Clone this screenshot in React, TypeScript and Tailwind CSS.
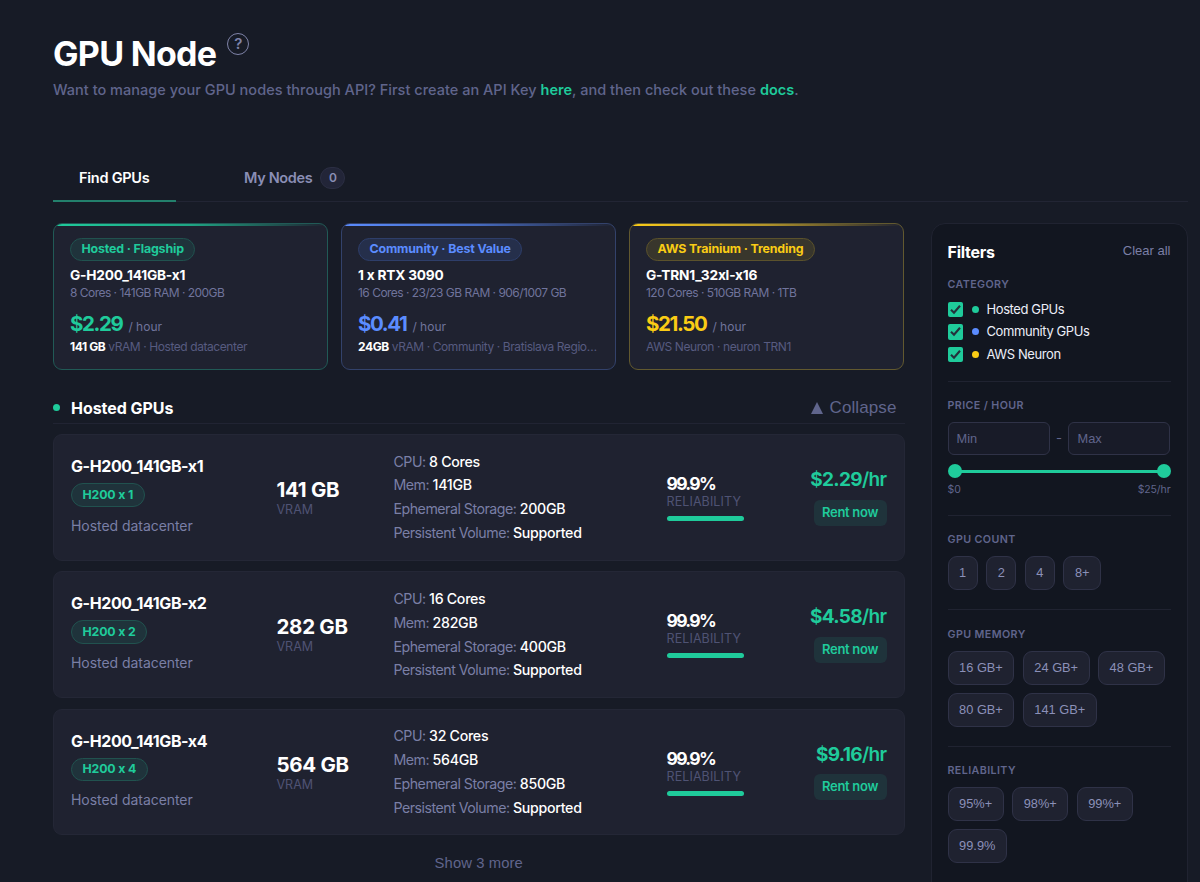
import React from 'react'

type Tone = 'green' | 'blue' | 'yellow'

const tones: Record<Tone, { card: string; bar: string; pill: string; text: string; dot: string }> = {
  green: {
    card: 'border-[#215a56]',
    bar: 'from-[#1fcb9b] via-[#1fa584] to-transparent',
    pill: 'border-[#21524f] bg-[#1f333b]',
    text: 'text-[#1fcb9b]',
    dot: 'bg-[#1fcb9b]',
  },
  blue: {
    card: 'border-[#33426b]',
    bar: 'from-[#5b8cff] via-[#466bc0] to-transparent',
    pill: 'border-[#2e3e6a] bg-[#252f4b]',
    text: 'text-[#5b8cff]',
    dot: 'bg-[#5b8cff]',
  },
  yellow: {
    card: 'border-[#62592f]',
    bar: 'from-[#facc15] via-[#b1932a] to-transparent',
    pill: 'border-[#5b522c] bg-[#38362c]',
    text: 'text-[#facc15]',
    dot: 'bg-[#facc15]',
  },
}

interface Featured {
  tone: Tone
  tag: string
  name: string
  specs: string
  price: string
  vram?: string
  note: string
}

const featured: Featured[] = [
  {
    tone: 'green',
    tag: 'Hosted · Flagship',
    name: 'G-H200_141GB-x1',
    specs: '8 Cores · 141GB RAM · 200GB',
    price: '$2.29',
    vram: '141 GB',
    note: 'vRAM · Hosted datacenter',
  },
  {
    tone: 'blue',
    tag: 'Community · Best Value',
    name: '1 x RTX 3090',
    specs: '16 Cores · 23/23 GB RAM · 906/1007 GB',
    price: '$0.41',
    vram: '24GB',
    note: 'vRAM · Community · Bratislava Regio…',
  },
  {
    tone: 'yellow',
    tag: 'AWS Trainium · Trending',
    name: 'G-TRN1_32xl-x16',
    specs: '120 Cores · 510GB RAM · 1TB',
    price: '$21.50',
    note: 'AWS Neuron · neuron TRN1',
  },
]

const nodes = [
  { name: 'G-H200_141GB-x1', gpu: 'H200 x 1', vram: '141 GB', cpu: '8 Cores', mem: '141GB', disk: '200GB', price: '$2.29' },
  { name: 'G-H200_141GB-x2', gpu: 'H200 x 2', vram: '282 GB', cpu: '16 Cores', mem: '282GB', disk: '400GB', price: '$4.58' },
  { name: 'G-H200_141GB-x4', gpu: 'H200 x 4', vram: '564 GB', cpu: '32 Cores', mem: '564GB', disk: '850GB', price: '$9.16' },
]

const categories: { label: string; tone: Tone }[] = [
  { label: 'Hosted GPUs', tone: 'green' },
  { label: 'Community GPUs', tone: 'blue' },
  { label: 'AWS Neuron', tone: 'yellow' },
]

function FeaturedCard({ item }: { item: Featured }) {
  const tone = tones[item.tone]
  return (
    <div className={`relative h-[147px] w-[275px] overflow-hidden rounded-[9px] border bg-[#1f2230] px-4 pt-[13.5px] ${tone.card}`}>
      <div className={`absolute inset-x-0 top-0 h-0.5 bg-gradient-to-r ${tone.bar}`} />
      <div className={`flex h-[23.5px] w-fit items-center rounded-full border px-[10.5px] text-[12.4px] font-bold tracking-[-0.15px] ${tone.pill} ${tone.text}`}>
        {item.tag}
      </div>
      <div className="mt-[5px] text-[13.7px] leading-[18px] font-bold tracking-[-0.2px] text-white">{item.name}</div>
      <div className="text-[12px] leading-[17px] tracking-[-0.52px] text-[#70749c]">{item.specs}</div>
      <div className="mt-[9px] flex h-[27px] items-baseline gap-[6px]">
        <span className={`text-[20.5px] leading-[27px] font-bold tracking-[-1.4px] ${tone.text}`}>{item.price}</span>
        <span className="text-[12px] text-[#70749c]">/ hour</span>
      </div>
      <div className="mt-px text-[12px] leading-[18px] tracking-[-0.42px] whitespace-nowrap text-[#575b80]">
        {item.vram && <b className="mr-[3px] font-bold text-white">{item.vram}</b>}
        {item.note}
      </div>
    </div>
  )
}

function Spec({ label, value }: { label: string; value: string }) {
  return (
    <div className="text-[14.2px] leading-[23.9px] tracking-[-0.5px] text-[#7a7fa6]">
      {label}: <span className="font-medium tracking-[-0.3px] text-white">{value}</span>
    </div>
  )
}

function NodeRow({ node }: { node: (typeof nodes)[number] }) {
  return (
    <div className="flex h-[126.5px] rounded-[9px] border border-[#242736] bg-[#1f2230] px-[17px]">
      <div className="w-[205.5px] pt-[21px]">
        <div className="text-[16px] leading-5 font-bold tracking-[-0.4px] text-white">{node.name}</div>
        <div className="mt-[7px] flex h-[23.5px] w-fit items-center rounded-full border border-[#21524f] bg-[#1f333b] px-[10.5px] text-[12.3px] font-bold tracking-[-0.15px] text-[#1fcb9b]">
          {node.gpu}
        </div>
        <div className="mt-[9px] text-[14px] leading-5 tracking-[-0.05px] text-[#7a7fa6]">Hosted datacenter</div>
      </div>
      <div className="w-[117px] pt-[42px]">
        <div className="text-[20.5px] leading-[26px] font-bold tracking-[-0.3px] text-white">{node.vram}</div>
        <div className="text-[12.5px] leading-[13px] text-[#4f5374]">VRAM</div>
      </div>
      <div className="w-[273px] pt-[14.5px]">
        <Spec label="CPU" value={node.cpu} />
        <Spec label="Mem" value={node.mem} />
        <Spec label="Ephemeral Storage" value={node.disk} />
        <Spec label="Persistent Volume" value="Supported" />
      </div>
      <div className="w-[77px] pt-[38px]">
        <div className="text-[17.5px] leading-[22px] font-bold tracking-[-1.7px] text-white">99.9%</div>
        <div className="text-[12.5px] leading-[14px] tracking-[0.1px] text-[#4f5374]">RELIABILITY</div>
        <div className="mt-[7px] h-[5px] rounded-full bg-[#1fcb9b]" />
      </div>
      <div className="flex flex-1 flex-col items-end pt-[33px]">
        <div className="text-[19px] leading-6 font-bold tracking-[-0.65px] text-[#1fcb9b]">
          {node.price}
          <span className="font-semibold">/hr</span>
        </div>
        <button className="mt-[7.5px] h-[26px] w-[73px] rounded-[6px] bg-[#1f333b] text-[13px] font-semibold tracking-[-0.3px] text-[#1fcb9b]">
          Rent now
        </button>
      </div>
    </div>
  )
}

function Heading({ children }: { children: React.ReactNode }) {
  return <div className="text-[10.7px] leading-4 font-semibold tracking-[0.4px] text-[#60658c]">{children}</div>
}

function Chips({ items }: { items: string[] }) {
  return (
    <div className="mt-2 flex flex-wrap gap-x-[8.3px] gap-y-2">
      {items.map(item => (
        <button
          key={item}
          className="h-[34px] rounded-[9px] border border-[#2f3247] bg-[#1f2230] px-[10.6px] pb-px font-['Liberation_Sans',Arial,sans-serif] text-[12.8px] text-[#8b90b8]"
        >
          {item}
        </button>
      ))}
    </div>
  )
}

function PriceInput({ placeholder }: { placeholder: string }) {
  return (
    <input
      placeholder={placeholder}
      className="h-[33px] w-[102px] rounded-[6px] border border-[#2f3247] bg-[#181b28] px-2 pb-px font-['Liberation_Sans',Arial,sans-serif] text-[12.8px] placeholder:text-[#60658c]"
    />
  )
}

function Filters() {
  return (
    <aside className="h-[700px] w-[257.5px] shrink-0 rounded-[14px] border border-[#202331] bg-[#121620] pt-4 pr-[16.5px] pl-4">
      <div className="flex h-6 items-center justify-between">
        <span className="text-[16px] font-bold tracking-[-0.25px] text-white">Filters</span>
        <span className="pb-0.5 font-['Liberation_Sans',Arial,sans-serif] text-[13px] text-[#7b7fa6]">Clear all</span>
      </div>
      <div className="mt-[13px]">
        <Heading>CATEGORY</Heading>
      </div>
      <div className="mt-[5px]">
        {categories.map(category => (
          <label key={category.label} className="flex h-[22.6px] items-center text-[13px] tracking-[-0.4px] text-[#eceef8]">
            <span className="flex size-[15.5px] items-center justify-center rounded-[2px] bg-[#1fcb9b]">
              <svg viewBox="0 0 15 15" className="size-[15px]" fill="none" stroke="#24313c" strokeWidth="2.1">
                <path d="M3 7.8 L6 10.8 L12 3.8" />
              </svg>
            </span>
            <span className={`mr-2 ml-[8.5px] size-[7px] rounded-full ${tones[category.tone].dot}`} />
            {category.label}
          </label>
        ))}
      </div>
      <div className="mt-[15px] border-t border-[#202331] pt-[16.5px]">
        <Heading>PRICE / HOUR</Heading>
        <div className="mt-2 flex items-center justify-between text-[13px] text-[#60658c]">
          <PriceInput placeholder="Min" />
          <span>-</span>
          <PriceInput placeholder="Max" />
        </div>
        <div className="mt-[9px] flex h-[14px] items-center">
          <span className="size-[14px] rounded-full bg-[#1fcb9b]" />
          <span className="-mx-1 h-[3px] flex-1 bg-[#1fcb9b]" />
          <span className="size-[14px] rounded-full bg-[#1fcb9b]" />
        </div>
        <div className="mt-[4px] flex justify-between text-[10.5px] leading-4 tracking-[-0.1px] text-[#60658c]">
          <span>$0</span>
          <span>$25/hr</span>
        </div>
      </div>
      <div className="mt-[16.5px] border-t border-[#202331] pt-[16.5px]">
        <Heading>GPU COUNT</Heading>
        <Chips items={['1', '2', '4', '8+']} />
      </div>
      <div className="mt-[19px] border-t border-[#202331] pt-[16.5px]">
        <Heading>GPU MEMORY</Heading>
        <Chips items={['16 GB+', '24 GB+', '48 GB+', '80 GB+', '141 GB+']} />
      </div>
      <div className="mt-[19px] border-t border-[#202331] pt-[16.5px]">
        <Heading>RELIABILITY</Heading>
        <Chips items={['95%+', '98%+', '99%+', '99.9%']} />
      </div>
    </aside>
  )
}

export default function App() {
  return (
    <div className="h-[882px] w-[1200px] overflow-hidden bg-[#171b26] pl-[53px] font-[Inter,sans-serif]">
      <header className="pt-[32px]">
        <div className="flex">
          <h1 className="text-[34px] leading-[44px] font-bold tracking-[-0.7px] text-white">GPU Node</h1>
          <span className="mt-px ml-[11px] flex size-[22px] items-center justify-center rounded-full border-[1.5px] border-[#7f83a8] text-[15px] font-semibold text-[#7f83a8]">
            ?
          </span>
        </div>
        <p className="mt-[3px] text-[14.5px] leading-[22px] font-medium tracking-[0.02px] text-[#60658c]">
          Want to manage your GPU nodes through API? First create an API Key{' '}
          <a className="font-semibold text-[#1fcb9b]">here</a>, and then check out these{' '}
          <a className="font-semibold text-[#1fcb9b]">docs</a>.
        </p>
      </header>

      <nav className="mt-[54px] flex h-[47px] w-[1135px] border-b border-[#222534]">
        <div className="-mb-px flex w-[122.5px] items-center justify-center border-b-2 border-[#23806c] text-[14.5px] font-semibold tracking-[-0.25px] text-white">
          Find GPUs
        </div>
        <div className="ml-[68.5px] flex items-center text-[14.5px] font-semibold tracking-[-0.35px] text-[#8a8eb5]">
          My Nodes
          <span className="ml-2 flex h-[22px] w-[25px] items-center justify-center rounded-full border border-[#2b2e43] bg-[#222538] text-[12px]">
            0
          </span>
        </div>
      </nav>

      <div className="mt-[21px] flex gap-[26px]">
        <main className="w-[851.5px]">
          <div className="flex gap-[13px]">
            {featured.map(item => (
              <FeaturedCard key={item.name} item={item} />
            ))}
          </div>

          <section className="mt-[22.5px]">
            <div className="flex h-[31px] items-center justify-between border-b border-[#212433] pr-[8px]">
              <h2 className="flex items-center gap-[11px] text-[16px] font-bold tracking-[-0.05px] text-white">
                <span className="size-[7px] rounded-full bg-[#1fcb9b]" />
                Hosted GPUs
              </h2>
              <span className="flex items-center gap-[7px] font-['Liberation_Sans',Arial,sans-serif] text-[17px] tracking-[0.1px] text-[#60658c]">
                <svg viewBox="0 0 12 12" className="size-3" fill="currentColor">
                  <path d="M6 0 L12 12 L0 12 Z" />
                </svg>
                Collapse
              </span>
            </div>
            <div className="mt-[10.5px] flex flex-col gap-[10.75px]">
              {nodes.map(node => (
                <NodeRow key={node.name} node={node} />
              ))}
            </div>
            <div className="mt-[17px] text-center font-['Liberation_Sans',Arial,sans-serif] text-[14.8px] leading-[22px] tracking-[0.1px] text-[#60658c]">
              Show 3 more
            </div>
          </section>
        </main>

        <Filters />
      </div>
    </div>
  )
}
